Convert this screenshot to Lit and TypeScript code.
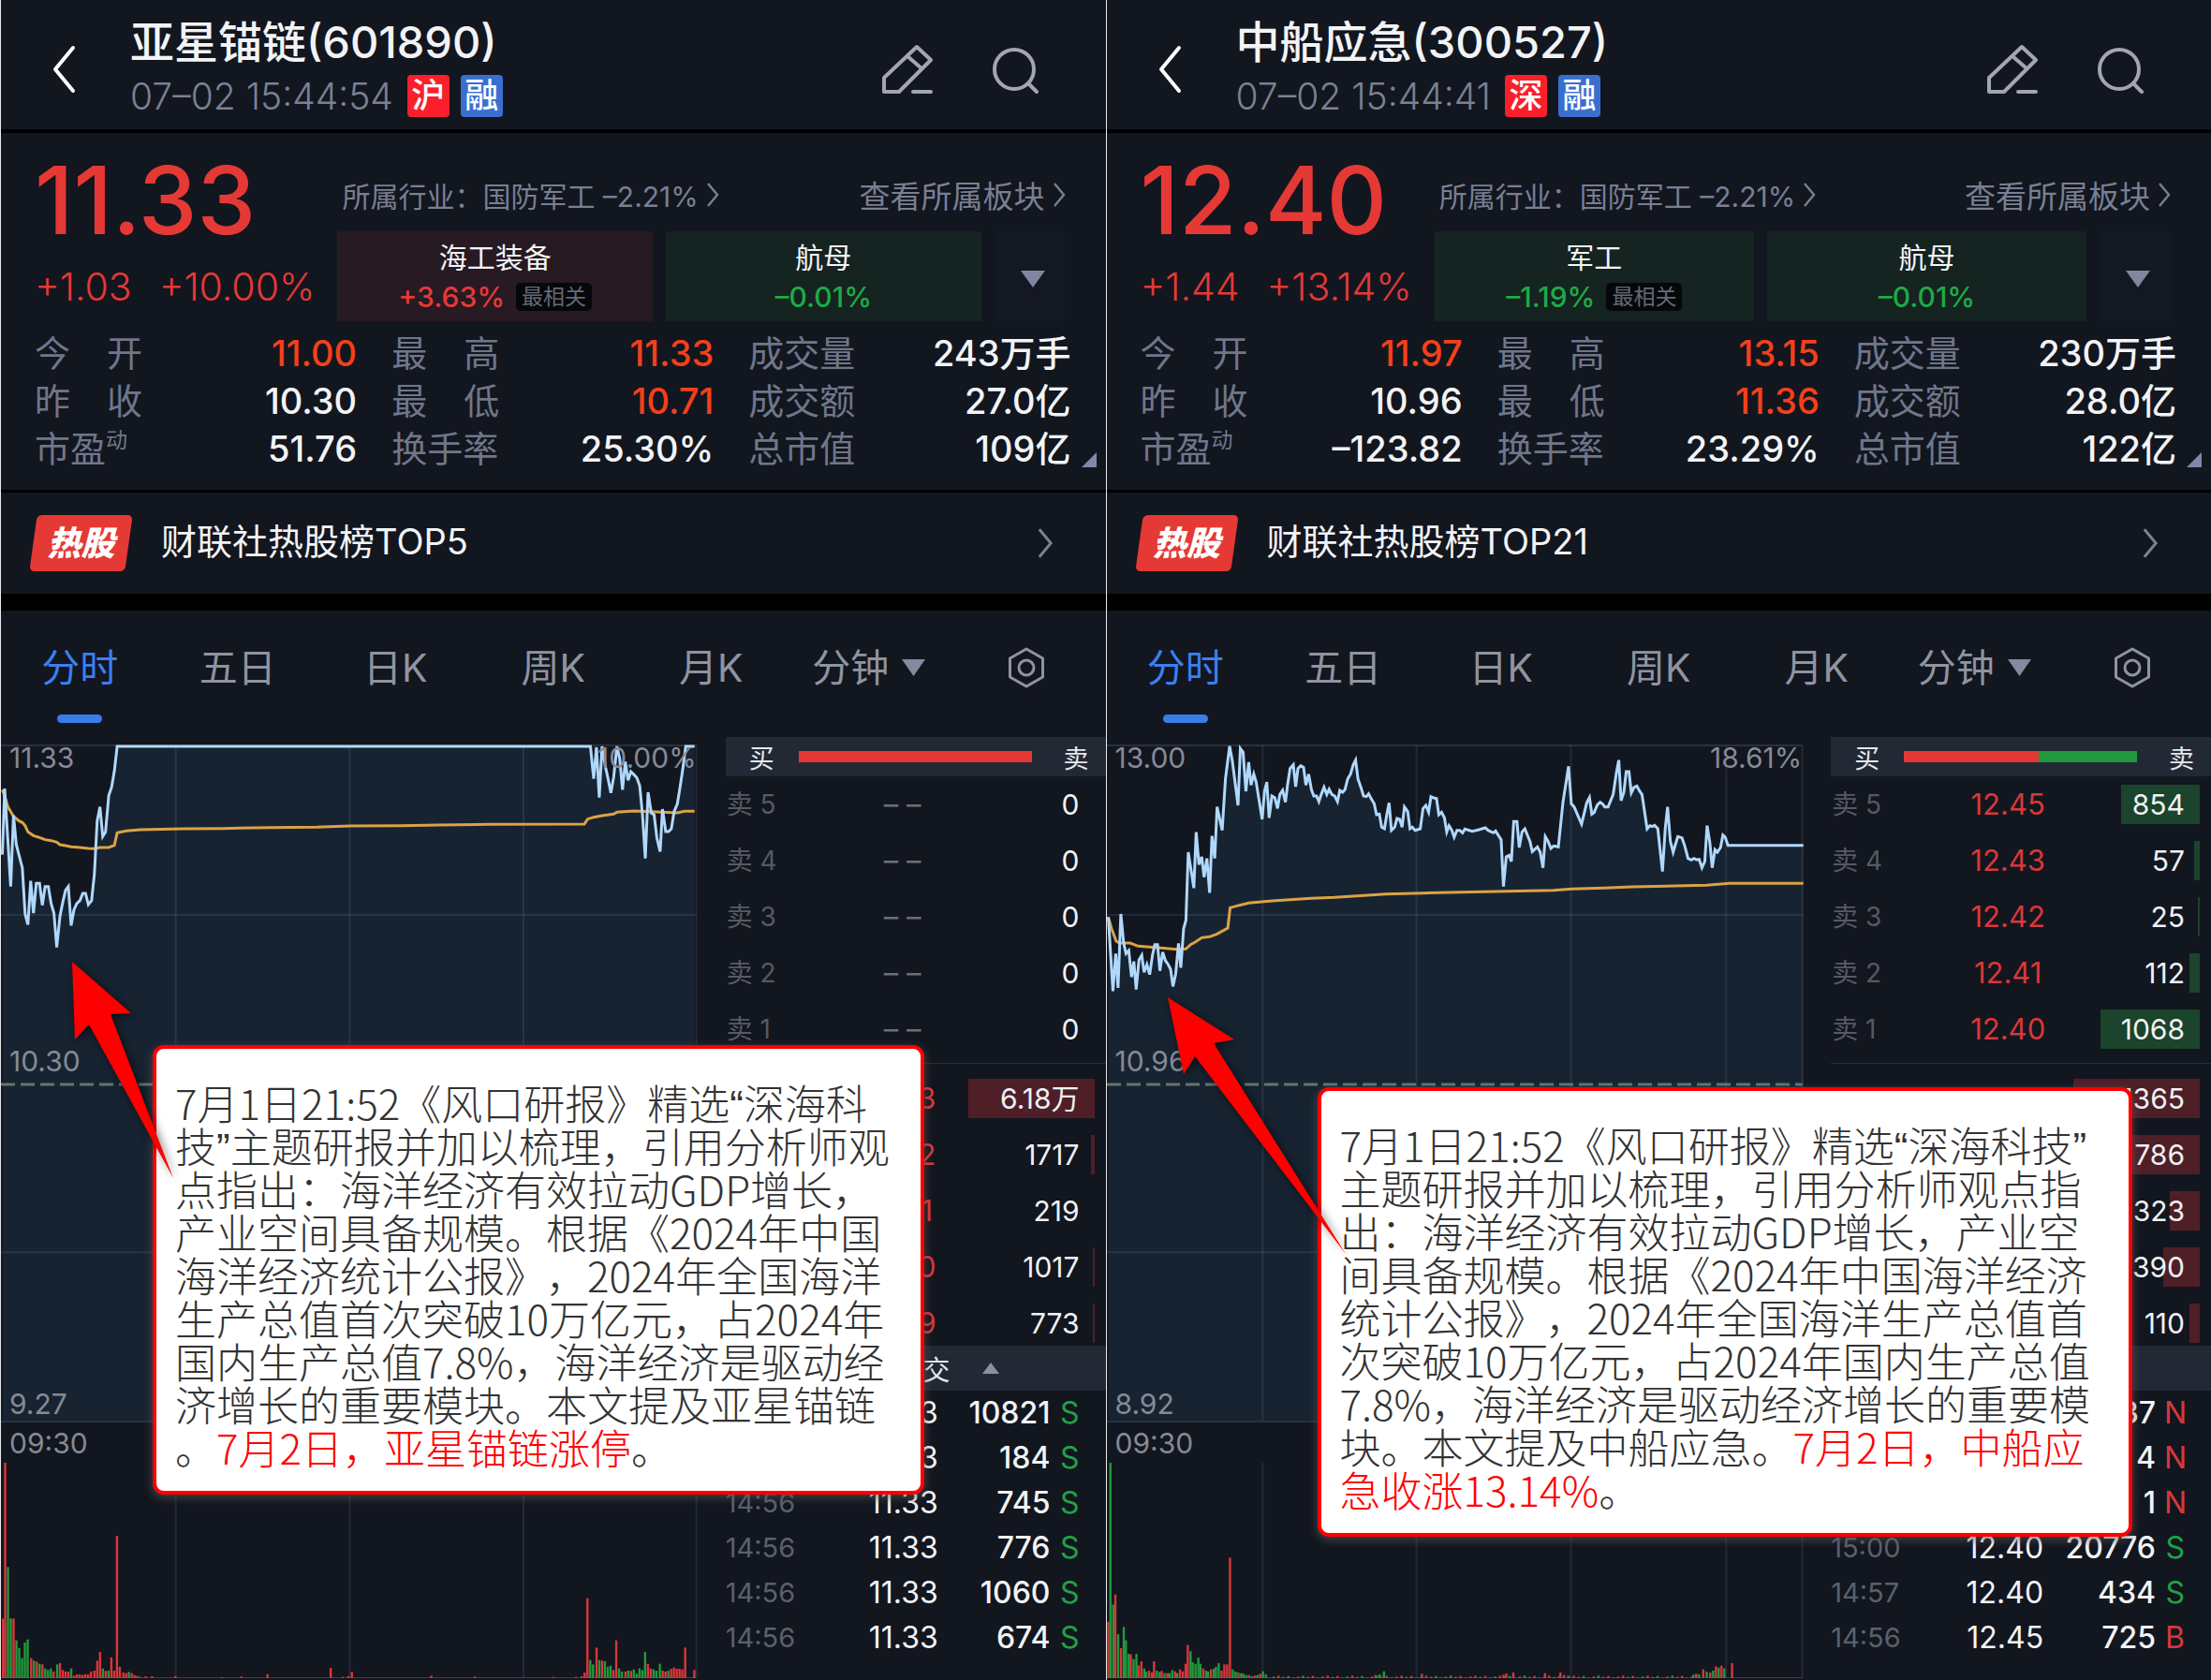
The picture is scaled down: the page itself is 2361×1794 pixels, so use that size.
import { LitElement, html, svg, css, nothing } from "lit";
import { customElement, property } from "lit/decorators.js";
import { classMap } from "lit/directives/class-map.js";
import { styleMap } from "lit/directives/style-map.js";

type Tone = "up" | "down" | "plain" | "hot";

interface Stat { label: string; sup?: string; value: string; tone: Tone; }
interface Sector { name: string; change: string; tone: Tone; tag?: string; }
interface Quote { label: string; price: string; volume: string; bar: number; }
interface Trade { time: string; price: string; volume: string; side: string; }
interface NoteLine { text: string; accent?: string; tail?: string; }

interface Stock {
  name: string;
  stamp: string;
  market: string;
  price: string;
  change: string;
  percent: string;
  sectors: Sector[];
  stats: Stat[];
  rank: string;
  high: string;
  base: string;
  low: string;
  highPercent: string;
  grid: number[];
  line: string;
  average: string;
  volume: string;
  buyShare: number;
  asks: Quote[];
  bids: Quote[];
  trades: Trade[];
  note: { left: number; top: number; width: number; lines: NoteLine[] };
  arrow: string;
}

/* Low background volume between two x positions, as "x,top,colour" bars. */
const quietBars = (from: number, to: number, step: number): string => {
  const bars: string[] = [];
  for (let i = 0, x = from; x < to; i++, x += step) {
    const top = 1234 - ((i * 7 + (i % 5) * 3) % 7);
    bars.push(`${Math.round(x)},${top},${i % 3 === 1 ? "g" : "r"}`);
  }
  return bars.join(" ");
};

const STOCKS: Stock[] = [
  {
    name: "亚星锚链(601890)",
    stamp: "07–02 15:44:54",
    market: "沪",
    price: "11.33",
    change: "+1.03",
    percent: "+10.00%",
    sectors: [
      { name: "海工装备", change: "+3.63%", tone: "up", tag: "最相关" },
      { name: "航母", change: "–0.01%", tone: "down" },
    ],
    stats: [
      { label: "今开", value: "11.00", tone: "hot" },
      { label: "最高", value: "11.33", tone: "hot" },
      { label: "成交量", value: "243万手", tone: "plain" },
      { label: "昨收", value: "10.30", tone: "plain" },
      { label: "最低", value: "10.71", tone: "hot" },
      { label: "成交额", value: "27.0亿", tone: "plain" },
      { label: "市盈", sup: "动", value: "51.76", tone: "plain" },
      { label: "换手率", value: "25.30%", tone: "plain" },
      { label: "总市值", value: "109亿", tone: "plain" },
    ],
    rank: "财联社热股榜TOP5",
    high: "11.33",
    base: "10.30",
    low: "9.27",
    highPercent: "10.00%",
    grid: [376, 750, 1124],
    line:
      "3,428 8,216 21,530 27,302 33,395 39,430 46,470 52,618 58,652 64,512 70,615 76,520 83,520 89,590 95,530 102,530 108,585 114,615 120,725 127,625 133,580 139,542 145,530 151,655 157,605 163,585 170,575 176,552 182,552 188,588 195,575 201,490 207,320 213,275 219,370 225,355 232,238 238,212 244,160 250,81 1268,81 1275,185 1281,84 1287,245 1293,81 1300,145 1306,185 1312,230 1318,180 1325,81 1331,120 1337,220 1343,130 1349,190 1355,162 1362,172 1368,182 1374,207 1380,300 1386,440 1392,228 1399,295 1405,300 1411,375 1418,418 1423,282 1430,354 1436,354 1442,345 1448,290 1455,265 1461,210 1467,150 1473,81 1492,81",
    average:
      "3,220 8,240 15,275 27,305 39,320 46,325 52,335 58,355 70,367 83,373 95,380 108,383 120,388 127,396 139,399 151,403 170,405 188,408 201,409 213,405 232,405 244,398 250,358 270,352 300,348 393,345 480,344 580,341 680,340 750,336 860,335 940,333 1050,331 1255,330 1262,314 1275,308 1293,303 1318,298 1325,292 1362,288 1400,290 1455,294 1470,289 1492,289",
    volume:
      "3,1045,r 6,546,r 10,880,g 14,1045,g 18,1045,r 22,1115,g 26,1140,g 30,1172,g 34,1122,g 38,1112,g 43,1172,r 47,1180,g 51,1183,r 55,1190,g 59,1192,r 63,1205,g 67,1210,g 71,1205,g 75,1215,r 80,1192,g 84,1188,r 88,1210,r 92,1215,r 96,1215,r 100,1205,g 104,1228,r 108,1224,r 112,1224,r 116,1226,r 120,1224,r 124,1224,r 128,1215,r 133,1212,r 137,1180,r 141,1152,r 145,1205,g 149,1213,r 153,1212,g 157,1170,r 161,1212,r 165,780,r 169,1200,r 174,1218,r 178,1220,r 182,1216,g 186,1220,r 190,1226,r 194,1229,r 198,1232,r 206,1230,r 215,1230,r 248,1230,r 314,1233,r 342,1231,r 379,1223,r 469,1203,r 486,1232,r 494,1230,r 499,1216,r 612,1228,r 674,1231,r 786,1232,r 818,1232,r 826,1230,r 830,1218,r 834,980,r 838,1178,g 842,1192,g 847,1138,r 851,1178,g 855,1180,r 859,1182,g 863,1200,g 867,1196,g 871,1210,r 875,1115,r 879,1205,g 883,1215,g 888,1215,r 892,1212,g 896,1213,r 900,1208,g 904,1222,g 908,1205,g 912,1210,g 916,1152,g 920,1190,r 924,1205,r 928,1208,g 932,1212,g 937,1190,g 941,1212,r 945,1215,r 949,1212,g 953,1206,r 957,1202,r 961,1206,r 965,1206,r 969,1208,r 973,1138,r 986,1210,r",
    buyShare: 100,
    asks: ["5", "4", "3", "2", "1"].map((n) => ({ label: "卖 " + n, price: "– –", volume: "0", bar: 0 })),
    bids: [
      { label: "", price: "11.33", volume: "6.18万", bar: 135 },
      { label: "", price: "11.32", volume: "1717", bar: 4 },
      { label: "", price: "11.31", volume: "219", bar: 0 },
      { label: "", price: "11.30", volume: "1017", bar: 2 },
      { label: "", price: "11.29", volume: "773", bar: 2 },
    ],
    trades: [
      { time: "", price: "11.33", volume: "10821", side: "S" },
      { time: "", price: "11.33", volume: "184", side: "S" },
      { time: "14:56", price: "11.33", volume: "745", side: "S" },
      { time: "14:56", price: "11.33", volume: "776", side: "S" },
      { time: "14:56", price: "11.33", volume: "1060", side: "S" },
      { time: "14:56", price: "11.33", volume: "674", side: "S" },
    ],
    note: {
      left: 162,
      top: 1116,
      width: 824,
      lines: [
        { text: "7月1日21:52《风口研报》精选“深海科" },
        { text: "技”主题研报并加以梳理，引用分析师观" },
        { text: "点指出：海洋经济有效拉动GDP增长，" },
        { text: "产业空间具备规模。根据《2024年中国" },
        { text: "海洋经济统计公报》，2024年全国海洋" },
        { text: "生产总值首次突破10万亿元，占2024年" },
        { text: "国内生产总值7.8%，海洋经济是驱动经" },
        { text: "济增长的重要模块。本文提及亚星锚链" },
        { text: "。", accent: "7月2日，亚星锚链涨停", tail: "。" },
      ],
    },
    arrow: "76,1027 139,1082 117,1083 184,1258 94,1094 79,1110",
  },
  {
    name: "中船应急(300527)",
    stamp: "07–02 15:44:41",
    market: "深",
    price: "12.40",
    change: "+1.44",
    percent: "+13.14%",
    sectors: [
      { name: "军工", change: "–1.19%", tone: "down", tag: "最相关" },
      { name: "航母", change: "–0.01%", tone: "down" },
    ],
    stats: [
      { label: "今开", value: "11.97", tone: "hot" },
      { label: "最高", value: "13.15", tone: "hot" },
      { label: "成交量", value: "230万手", tone: "plain" },
      { label: "昨收", value: "10.96", tone: "plain" },
      { label: "最低", value: "11.36", tone: "hot" },
      { label: "成交额", value: "28.0亿", tone: "plain" },
      { label: "市盈", sup: "动", value: "–123.82", tone: "plain" },
      { label: "换手率", value: "23.29%", tone: "plain" },
      { label: "总市值", value: "122亿", tone: "plain" },
    ],
    rank: "财联社热股榜TOP21",
    high: "13.00",
    base: "10.96",
    low: "8.92",
    highPercent: "18.61%",
    grid: [335, 666, 998, 1332],
    line:
      "3,628 13,865 19,745 24,855 30,618 36,710 41,745 47,735 53,820 58,770 63,860 69,765 75,750 80,805 86,780 92,812 98,750 103,716 109,716 114,800 120,740 126,768 131,778 137,795 142,850 148,810 154,712 159,790 165,665 170,638 175,420 187,535 192,356 198,460 204,435 209,500 215,440 221,550 226,368 232,440 237,275 248,350 255,185 264,80 270,130 282,270 287,88 293,100 299,225 305,132 310,205 316,170 321,195 334,315 339,225 344,195 349,310 355,240 361,245 367,280 372,235 378,222 384,260 389,200 394,152 401,140 406,210 411,152 417,143 423,148 428,205 434,170 440,220 445,240 451,240 456,258 461,235 467,212 473,235 478,218 484,235 490,240 496,258 501,222 507,228 512,220 518,185 524,170 530,140 535,125 540,185 547,215 552,240 558,242 563,233 569,250 575,265 580,300 586,298 591,340 597,345 602,300 607,262 612,350 619,340 624,312 630,315 635,340 640,275 647,290 652,345 657,340 663,350 674,345 680,280 686,270 692,292 697,242 703,246 709,248 714,300 720,292 726,310 731,355 736,335 742,350 747,372 753,350 759,350 765,358 770,346 786,353 800,348 814,342 820,350 831,358 836,352 848,380 853,530 859,435 865,430 870,450 875,322 882,322 887,405 893,355 899,345 910,385 915,418 926,403 932,420 938,470 943,370 949,385 955,408 961,400 971,403 981,260 993,145 999,265 1005,275 1021,330 1032,262 1038,245 1043,298 1048,293 1055,268 1061,260 1066,265 1071,275 1078,275 1089,235 1096,165 1101,125 1106,255 1112,228 1117,162 1123,162 1128,230 1134,212 1140,208 1146,225 1151,235 1162,345 1168,335 1173,338 1178,334 1185,345 1195,482 1201,345 1206,275 1212,385 1218,420 1228,370 1237,374 1243,400 1250,440 1257,445 1263,440 1268,444 1274,443 1280,470 1286,450 1291,335 1297,390 1302,470 1308,412 1313,420 1320,405 1325,365 1330,372 1336,398 1498,398",
    average:
      "3,628 10,665 20,705 27,711 50,711 67,721 85,723 110,726 150,731 170,730 180,716 190,708 204,694 221,691 237,682 260,663 265,598 285,590 305,583 355,576 440,568 490,565 600,554 680,551 760,548 960,542 1000,538 1070,535 1130,531 1290,526 1340,520 1498,520",
    volume:
      "2,1055,r 5,546,g 9,1000,g 12,968,r 16,1095,g 20,1140,r 24,1072,g 27,1115,g 31,1158,g 34,1160,r 38,1175,g 42,1158,g 45,1195,r 49,1182,r 53,1205,g 56,1215,g 60,1212,r 64,1218,r 67,1182,r 71,1212,g 75,1216,g 78,1213,r 82,1220,g 86,1220,r 89,1220,g 93,1210,g 97,1214,r 100,1220,g 104,1208,r 108,1214,r 112,1190,r 115,1130,r 119,1150,g 122,1185,g 126,1190,g 130,1170,g 133,1190,g 137,1205,r 141,1212,g 144,1215,g 148,1208,r 152,1206,g 155,1200,g 159,1188,g 163,1212,r 167,1192,r 171,1192,r 175,850,r 179,1208,g 183,1215,g 187,1218,r 191,1220,g 194,1222,g 198,1226,g 202,1226,r 206,1230,g 210,1228,r 214,1226,g 218,1222,r 222,1214,g 226,1224,g 382,1226,r 388,1224,g 394,1214,g 448,1222,r 564,1225,r 568,1221,r 578,1218,r 623,1220,r 645,1218,r 650,1226,r 656,1228,r 834,1225,g 838,1222,r 842,1224,g 848,1208,r 853,1215,g 858,1218,r 862,1212,g 866,1198,r 870,1202,g 874,1196,r 878,1205,g 889,1188,r " +
      quietBars(230, 834, 7),
    buyShare: 58,
    asks: [
      { label: "卖 5", price: "12.45", volume: "854", bar: 84 },
      { label: "卖 4", price: "12.43", volume: "57", bar: 6 },
      { label: "卖 3", price: "12.42", volume: "25", bar: 2 },
      { label: "卖 2", price: "12.41", volume: "112", bar: 11 },
      { label: "卖 1", price: "12.40", volume: "1068", bar: 106 },
    ],
    bids: [
      { label: "", price: "", volume: "1365", bar: 135 },
      { label: "", price: "", volume: "786", bar: 78 },
      { label: "", price: "", volume: "323", bar: 32 },
      { label: "", price: "", volume: "390", bar: 39 },
      { label: "", price: "", volume: "110", bar: 11 },
    ],
    trades: [
      { time: "", price: "", volume: "37", side: "N" },
      { time: "", price: "", volume: "4", side: "N" },
      { time: "", price: "", volume: "1", side: "N" },
      { time: "15:00", price: "12.40", volume: "20776", side: "S" },
      { time: "14:57", price: "12.40", volume: "434", side: "S" },
      { time: "14:56", price: "12.45", volume: "725", side: "B" },
    ],
    note: {
      left: 225,
      top: 1161,
      width: 870,
      lines: [
        { text: "7月1日21:52《风口研报》精选“深海科技”" },
        { text: "主题研报并加以梳理，引用分析师观点指" },
        { text: "出：海洋经济有效拉动GDP增长，产业空" },
        { text: "间具备规模。根据《2024年中国海洋经济" },
        { text: "统计公报》，2024年全国海洋生产总值首" },
        { text: "次突破10万亿元，占2024年国内生产总值" },
        { text: "7.8%，海洋经济是驱动经济增长的重要模" },
        { text: "块。本文提及中船应急。", accent: "7月2日，中船应" },
        { text: "", accent: "急收涨13.14%", tail: "。" },
      ],
    },
    arrow: "65,1065 136,1110 114,1114 255,1339 94,1128 82,1147",
  },
];

const chevron = (size: string) => html`
  <svg class="chevron ${size}" viewBox="0 0 14 26" aria-hidden="true">
    <path d="M2 1 12 13 2 25" fill="none" stroke="currentColor" stroke-width="2.4" />
  </svg>
`;

@customElement("price-chart")
export class PriceChart extends LitElement {
  @property({ attribute: false }) stock!: Stock;

  static styles = css`
    :host { display: flex; flex-direction: column; min-width: 0; }
    .plot { position: relative; height: 722px; }
    .canvas { display: block; width: 100%; height: 100%; overflow: visible; }
    .label { position: absolute; left: 9px; font-size: 30px; line-height: 30px; color: #858a96; }
    .label.top { top: -2px; }
    .label.middle { top: 322px; }
    .label.bottom { bottom: 4px; }
    .label.right { left: auto; right: 0; }
    .axis { height: 44px; padding: 8px 9px 0; box-sizing: border-box; font-size: 30px; line-height: 30px; color: #858a96; }
    .volume { height: 230px; padding-bottom: 2px; }
    .grid { stroke: #8fa3b8; stroke-opacity: 0.14; stroke-width: 2; vector-effect: non-scaling-stroke; }
    .edge { stroke: #2b313b; stroke-width: 2; vector-effect: non-scaling-stroke; }
    .base { stroke: #64756f; stroke-width: 3; stroke-dasharray: 15 6; vector-effect: non-scaling-stroke; }
    .area { fill: #172331; }
    .line { fill: none; stroke: #b0d8fc; stroke-width: 3; stroke-linejoin: miter; vector-effect: non-scaling-stroke; }
    .average { fill: none; stroke: #dba345; stroke-width: 3; vector-effect: non-scaling-stroke; }
    .r { fill: #d9363a; }
    .g { fill: #22993c; }
  `;

  render() {
    const s = this.stock;
    const right = s.line.split(" ").pop()!.split(",")[0];
    return html`
      <div class="plot">
        <svg class="canvas" viewBox="0 78 1496 2166" preserveAspectRatio="none" role="img" aria-label="分时">
          <polygon class="area" points="3,2244 ${s.line} ${right},2244"></polygon>
          <line class="edge" x1="0" y1="78" x2="1496" y2="78"></line>
          ${s.grid.map((x) => svg`<line class="grid" x1=${x} y1="78" x2=${x} y2="2244"></line>`)}
          <line class="grid" x1="1496" y1="78" x2="1496" y2="2244"></line>
          <line class="grid" x1="0" y1="621" x2="1496" y2="621"></line>
          <line class="grid" x1="0" y1="1702" x2="1496" y2="1702"></line>
          <line class="base" x1="0" y1="1164" x2="1496" y2="1164"></line>
          <line class="edge" x1="0" y1="2244" x2="1496" y2="2244"></line>
          <polyline class="average" points=${s.average}></polyline>
          <polyline class="line" points=${s.line}></polyline>
        </svg>
        <span class="label top">${s.high}</span>
        <span class="label top right">${s.highPercent}</span>
        <span class="label middle">${s.base}</span>
        <span class="label bottom">${s.low}</span>
      </div>
      <div class="axis">09:30</div>
      <div class="volume">
        <svg class="canvas" viewBox="0 546 989 690" preserveAspectRatio="none" aria-hidden="true">
          ${s.grid.map((x) => svg`<line class="grid" x1=${(x * 989) / 1496} y1="546" x2=${(x * 989) / 1496} y2="1236"></line>`)}
          <line class="grid" x1="989" y1="546" x2="989" y2="1236"></line>
          ${s.volume.trim().split(" ").map((bar) => {
            const [x, top, tone] = bar.split(",");
            return svg`<rect class=${tone} x=${Number(x) - 1.6} y=${top} width="3.2" height=${1236 - Number(top)}></rect>`;
          })}
          <rect class="r" x="0" y="1233" width="989" height="3" opacity="0.5"></rect>
        </svg>
      </div>
    `;
  }
}

@customElement("order-book")
export class OrderBook extends LitElement {
  @property({ attribute: false }) stock!: Stock;

  static styles = css`
    :host { display: block; }
    .head { display: flex; align-items: center; justify-content: space-between; height: 42px; padding: 0 18px 0 25px; background: #232835; font-size: 27px; color: #e6e8ee; }
    .ratio { display: flex; width: 249px; height: 12px; margin-right: 8px; background: #22993c; }
    .ratio-buy { background: #e53834; }
    .rows, .rows tbody { display: grid; }
    .rows tbody { gap: 18px; }
    .rows tr { display: grid; grid-template-columns: 100px 178px 1fr; align-items: center; padding-right: 12px; font-size: 30px; }
    .rows td, .rows th { padding: 0; font-weight: 400; text-align: left; line-height: 42px; height: 42px; }
    .asks { padding: 9px 0 15px; }
    .bids { padding: 16px 0 3px; border-top: 1px solid #262b35; }
    .rows th { padding-left: 1px; font-size: 28px; color: #555a65; white-space: pre; }
    .rows .price { text-align: center; font-size: 31px; color: #d8383a; }
    .rows .price.none { color: #6a6f7a; }
    .rows .amount { position: relative; text-align: right; padding-right: 16px; color: #f0f1f4; }
    .bar { position: absolute; right: 0; top: 0; height: 42px; }
    .asks .bar { background: #1a442b; }
    .bids .bar { background: #4f1f28; }
    .number { position: relative; }
    .deals { display: flex; align-items: center; gap: 34px; height: 48px; box-sizing: border-box; padding: 0 114px 0 0; justify-content: flex-end; background: #232835; font-size: 29px; color: #e6e8ee; }
    .up-mark { width: 18px; height: 12px; fill: #8b90a0; }
    .trades, .trades tbody { display: grid; }
    .trades { padding-bottom: 20px; }
    .trades tr { display: grid; grid-template-columns: 90px 137px 1fr 22px; padding-right: 28px; font-size: 32px; }
    .trades td { padding: 0; height: 48px; line-height: 48px; text-align: right; color: #f2f3f5; }
    .trades .time { text-align: left; font-size: 29px; color: #5b606c; }
    .trades .size { font-weight: 500; padding-right: 9px; }
    .trades .S { color: #22a044; }
    .trades .N, .trades .B { color: #d8383a; }
  `;

  private rows(list: Quote[], kind: string) {
    return html`
      <table class="rows ${kind}">
        <tbody>
          ${list.map(
            (q) => html`<tr>
              <th scope="row">${q.label}</th>
              <td class="price ${q.price.startsWith("–") ? "none" : ""}">${q.price}</td>
              <td class="amount">
                <span class="bar" style=${styleMap({ width: q.bar + "px" })}></span><span class="number">${q.volume}</span>
              </td>
            </tr>`
          )}
        </tbody>
      </table>
    `;
  }

  render() {
    const s = this.stock;
    return html`
      <div class="head">
        <span>买</span>
        <div class="ratio"><div class="ratio-buy" style=${styleMap({ width: s.buyShare + "%" })}></div></div>
        <span>卖</span>
      </div>
      ${this.rows(s.asks, "asks")} ${this.rows(s.bids, "bids")}
      <div class="deals">
        <span>成交</span>
        <svg class="up-mark" viewBox="0 0 18 12" aria-hidden="true"><path d="M9 0 18 12H0z" /></svg>
      </div>
      <table class="trades">
        <tbody>
          ${s.trades.map(
            (t) => html`<tr>
              <td class="time">${t.time}</td>
              <td class="price">${t.price}</td>
              <td class="size">${t.volume}</td>
              <td class=${t.side}>${t.side}</td>
            </tr>`
          )}
        </tbody>
      </table>
    `;
  }
}

@customElement("stock-panel")
export class StockPanel extends LitElement {
  @property({ attribute: false }) stock!: Stock;

  static styles = css`
    :host { position: relative; display: block; min-width: 0; border-left: 1px solid #e8eaee; background: #12161f; color: #f2f3f5; }
    button { border: 0; padding: 0; margin: 0; background: none; color: inherit; font: inherit; cursor: pointer; }
    a { color: inherit; text-decoration: none; }
    .bar { display: flex; align-items: center; height: 138px; box-sizing: border-box; padding: 0 69px 0 54px; }
    .back { display: flex; width: 84px; padding-top: 10px; }
    .back svg { width: 26px; height: 52px; }
    .titles { flex: 1; padding-top: 8px; }
    .title { margin: 0; font-size: 47px; line-height: 58px; font-weight: 500; }
    .meta { display: flex; align-items: center; gap: 12px; height: 56px; font-size: 39px; font-weight: 300; color: #7b8092; }
    .stamp { margin-right: 3px; }
    .mark { width: 45px; height: 45px; border-radius: 4px; text-align: center; line-height: 44px; font-size: 36px; font-weight: 500; color: #fff; }
    .mark.market { background: #fb1f2c; }
    .mark.margin { background: #3a6fd0; }
    .tools { display: flex; gap: 62px; padding-top: 10px; color: #a2a5b4; }
    .tools svg { display: block; width: 54px; height: 54px; }

    .quote { border-top: 4px solid #000; border-bottom: 3px solid #000; height: 388px; box-sizing: border-box; padding: 21px 37px 0 36px; }
    .top { display: flex; gap: 24px; height: 180px; }
    .figure { display: flex; flex-direction: column; color: #e53935; }
    .price { font-size: 100px; line-height: 102px; font-weight: 500; }
    .moves { display: flex; gap: 29px; padding-top: 16px; font-size: 41px; line-height: 50px; font-weight: 300; }
    .context { flex: 1; display: flex; flex-direction: column; min-width: 0; padding-right: 6px; }
    .links { display: flex; justify-content: space-between; align-items: center; height: 84px; box-sizing: border-box; padding: 5px 0 0 5px; color: #7a7f92; font-size: 30px; }
    .links a { display: flex; align-items: center; gap: 8px; }
    .links .all { font-size: 33px; }
    .chevron { flex: none; width: 14px; height: 26px; }
    .chevron.large { width: 18px; height: 32px; }
    .sectors { display: grid; grid-template-columns: 1fr 1fr 76px; gap: 14px; height: 96px; }
    .sector { display: flex; flex-direction: column; align-items: center; justify-content: center; gap: 6px; padding-top: 1px; font-size: 30px; line-height: 36px; color: #f4f5f7; }
    .sector.up { background: #271a22; }
    .sector.down { background: #152321; }
    .sector-change { display: flex; align-items: center; gap: 12px; font-weight: 500; }
    .up .sector-change { color: #e53935; }
    .down .sector-change { color: #1faa46; }
    .tag { padding: 0 6px; border-radius: 5px; background: #06070a; color: #656a74; font-size: 23px; line-height: 30px; font-weight: 400; }
    .more { display: flex; align-items: center; justify-content: center; padding: 6px 0 0 6px; background: #141822; }
    .more svg { width: 26px; height: 18px; fill: #8087a0; }
    .stats { position: relative; display: grid; grid-template-columns: repeat(3, 1fr); column-gap: 37px; margin: 9px 0 0; font-size: 38px; line-height: 51px; }
    .stat { display: flex; justify-content: space-between; }
    .stat dt { display: flex; justify-content: space-between; width: 115px; color: #70768a; }
    .stat dt.sup { justify-content: flex-start; }
    .stat sup { font-size: 23px; line-height: 32px; }
    .stat dd { margin: 0; font-weight: 500; }
    .stat .hot { color: #f4401a; }
    .corner { position: absolute; right: -27px; bottom: 6px; width: 16px; height: 16px; fill: #7f88a8; }

    .rank { display: flex; align-items: center; height: 108px; padding: 0 56px 0 31px; font-size: 38px; border-bottom: 18px solid #000; }
    .rank-badge { position: relative; width: 109px; height: 60px; margin-right: 31px; }
    .rank-badge svg { position: absolute; inset: 0; width: 100%; height: 100%; fill: #e53935; }
    .rank-badge strong { position: relative; display: block; text-align: center; font-size: 36px; line-height: 60px; font-style: italic; font-weight: 900; color: #fff; }
    .rank-text { flex: 1; line-height: 60px; padding-bottom: 4px; }
    .rank .chevron { color: #7d8290; }

    .tabs { display: grid; grid-template-columns: repeat(7, 1fr); height: 135px; }
    .tab { display: flex; flex-direction: column; align-items: center; justify-content: space-between; box-sizing: border-box; padding: 36px 0 15px; font-size: 41px; line-height: 50px; color: #9094a0; }
    .tab.active { color: #3a80f2; }
    .tab.active::after { content: ""; width: 48px; height: 9px; border-radius: 5px; background: #3a7de8; }
    .with-icon { display: flex; align-items: center; gap: 14px; }
    .caret { width: 25px; height: 18px; fill: #858aa0; }
    .gear { width: 40px; height: 44px; margin-top: 3px; }

    .market-view { display: grid; grid-template-columns: 743fr 437fr; }
    price-chart { padding-top: 9px; }
    order-book { padding-left: 31px; }

    .note { position: absolute; box-sizing: border-box; padding: 34px 20px 24px; border: 4px solid #f00; border-radius: 12px; background: #fff; color: #333; box-shadow: 0 3px 10px 1px rgba(90, 90, 90, 0.6); font-family: "Noto Sans CJK SC", sans-serif; font-size: 44px; font-weight: 300; line-height: 46px; text-spacing-trim: space-all; }
    .note p { margin: 0; white-space: nowrap; }
    .note em { font-style: normal; color: #f00; }
    .mark-quote { font-family: "Liberation Sans", sans-serif; line-height: 0; }
    .pointer { position: absolute; left: 0; top: 0; width: 100%; height: 100%; pointer-events: none; fill: #f00; filter: drop-shadow(2px 2px 5px rgba(0, 0, 0, 0.6)); }
  `;

  private stat(s: Stat) {
    const chars = s.label.length === 2 && !s.sup ? [...s.label] : [s.label];
    return html`<div class="stat">
      <dt class=${classMap({ sup: !!s.sup })}>
        ${chars.map((c) => html`<span>${c}</span>`)}${s.sup ? html`<sup>${s.sup}</sup>` : nothing}
      </dt>
      <dd class=${s.tone}>${s.value}</dd>
    </div>`;
  }

  /* Curly quotes are set in the Latin face so they stay narrow between Han characters. */
  private prose(text: string) {
    return text.split(/([“”])/).map((part) => (/[“”]/.test(part) ? html`<span class="mark-quote">${part}</span>` : part));
  }

  render() {
    const s = this.stock;
    return html`
      <header class="bar">
        <button class="back" aria-label="返回">
          <svg viewBox="0 0 26 52"><path d="M23 3 4 26 23 49" fill="none" stroke="#fff" stroke-width="4" stroke-linecap="round" stroke-linejoin="round" /></svg>
        </button>
        <div class="titles">
          <h1 class="title">${s.name}</h1>
          <div class="meta">
            <span class="stamp">${s.stamp}</span>
            <span class="mark market">${s.market}</span>
            <span class="mark margin">融</span>
          </div>
        </div>
        <div class="tools">
          <button aria-label="编辑">
            <svg viewBox="0 0 54 54" fill="none" stroke="currentColor" stroke-width="4" stroke-linejoin="round" stroke-linecap="round">
              <path d="M2 36 37 3 52 17 18 51H2zM27 13 42 26M33 51H52" />
            </svg>
          </button>
          <button aria-label="搜索">
            <svg viewBox="0 0 54 54" fill="none" stroke="currentColor" stroke-width="4" stroke-linecap="round">
              <circle cx="25" cy="27" r="21" /><path d="M40 42 49 51" />
            </svg>
          </button>
        </div>
      </header>

      <section class="quote">
        <div class="top">
          <div class="figure">
            <span class="price">${s.price}</span>
            <span class="moves"><span>${s.change}</span><span>${s.percent}</span></span>
          </div>
          <div class="context">
            <div class="links">
              <a href="#industry"><span>所属行业：国防军工 –2.21%</span>${chevron("small")}</a>
              <a class="all" href="#sectors"><span>查看所属板块</span>${chevron("small")}</a>
            </div>
            <div class="sectors">
              ${s.sectors.map(
                (x) => html`<button class="sector ${x.tone}">
                  <span>${x.name}</span>
                  <span class="sector-change">${x.change}${x.tag ? html`<span class="tag">${x.tag}</span>` : nothing}</span>
                </button>`
              )}
              <button class="more" aria-label="展开"><svg viewBox="0 0 26 18"><path d="M0 0H26L13 18z" /></svg></button>
            </div>
          </div>
        </div>
        <dl class="stats">
          ${s.stats.map((x) => this.stat(x))}
          <svg class="corner" viewBox="0 0 16 16" aria-hidden="true"><path d="M16 0V16H0z" /></svg>
        </dl>
      </section>

      <a class="rank" href="#rank">
        <span class="rank-badge">
          <svg viewBox="0 0 109 60" aria-hidden="true"><path d="M14 0H104Q109 0 109 5L102 55Q101 60 96 60H5Q0 60 0 55L7 5Q8 0 14 0z" /></svg>
          <strong>热股</strong>
        </span>
        <span class="rank-text">${s.rank}</span>
        ${chevron("large")}
      </a>

      <nav class="tabs">
        ${["分时", "五日", "日K", "周K", "月K"].map(
          (t, i) => html`<button class=${classMap({ tab: true, active: i === 0 })}>${t}</button>`
        )}
        <button class="tab" aria-haspopup="menu">
          <span class="with-icon">分钟<svg class="caret" viewBox="0 0 25 18"><path d="M0 0H25L12.5 18z" /></svg></span>
        </button>
        <button class="tab" aria-label="设置">
          <svg class="gear" viewBox="0 0 40 44" fill="none" stroke="currentColor" stroke-width="3">
            <path d="M20 2 37.5 12V32L20 42 2.5 32V12z" stroke-linejoin="round" /><circle cx="20" cy="22" r="8" />
          </svg>
        </button>
      </nav>

      <div class="market-view">
        <price-chart .stock=${s}></price-chart>
        <order-book .stock=${s}></order-book>
      </div>

      <aside class="note" style=${styleMap({ left: s.note.left + "px", top: s.note.top + "px", width: s.note.width + "px" })}>
        ${s.note.lines.map((l) => html`<p>${this.prose(l.text)}${l.accent ? html`<em>${l.accent}</em>` : nothing}${l.tail ?? nothing}</p>`)}
      </aside>
      <svg class="pointer" aria-hidden="true"><polygon points=${s.arrow}></polygon></svg>
    `;
  }
}

@customElement("app-root")
export class AppRoot extends LitElement {
  static styles = css`
    :host { display: grid; grid-template-columns: 1fr 1fr; min-height: 100vh; background: #12161f; font-family: Inter, "Noto Sans CJK SC", sans-serif; }
  `;

  render() {
    return STOCKS.map((s) => html`<stock-panel .stock=${s}></stock-panel>`);
  }
}
